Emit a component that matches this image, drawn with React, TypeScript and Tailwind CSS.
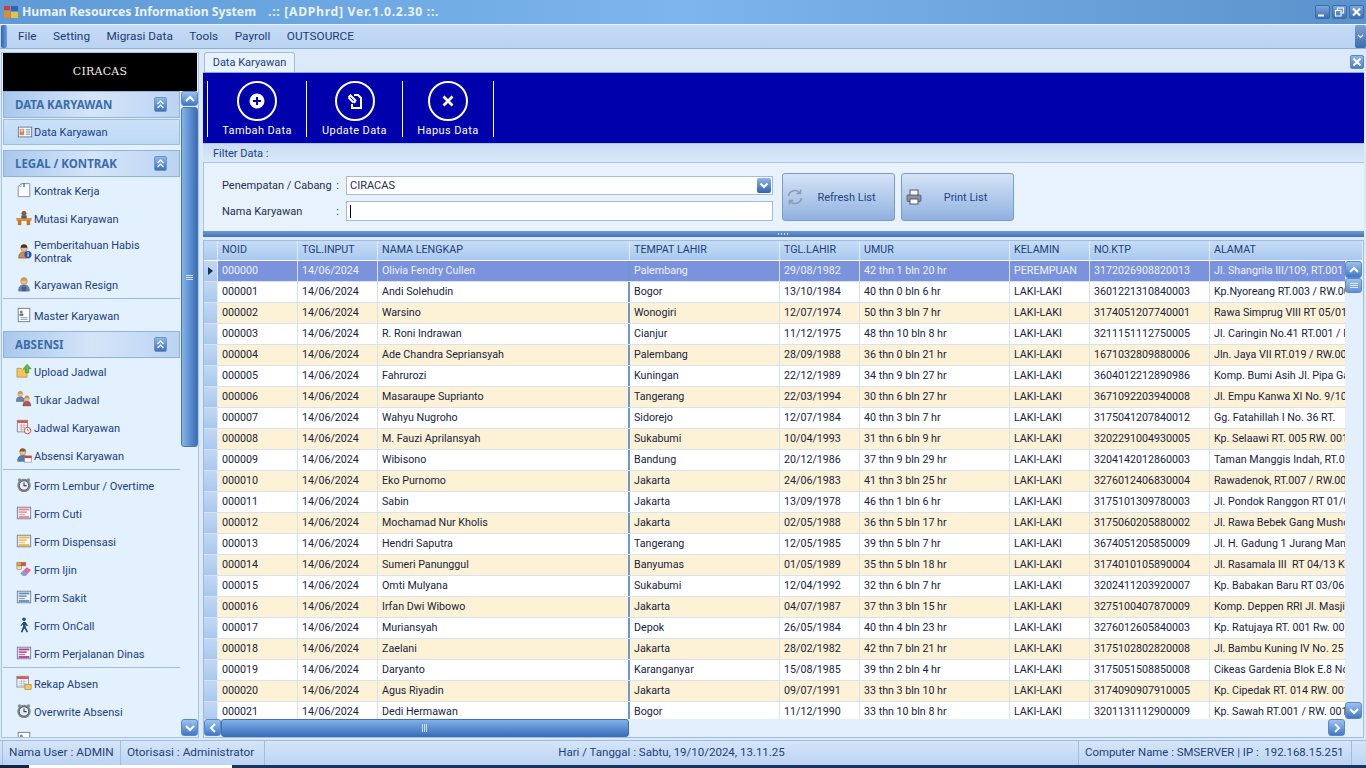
import { ReactNode } from "react";

const rows = [
  ["000000", "Olivia Fendry Cullen", "Palembang", "29/08/1982", "42 thn 1 bln 20 hr", "PEREMPUAN", "3172026908820013", "Jl. Shangrila III/109, RT.001 / RW"],
  ["000001", "Andi Solehudin", "Bogor", "13/10/1984", "40 thn 0 bln 6 hr", "LAKI-LAKI", "3601221310840003", "Kp.Nyoreang RT.003 / RW.001"],
  ["000002", "Warsino", "Wonogiri", "12/07/1974", "50 thn 3 bln 7 hr", "LAKI-LAKI", "3174051207740001", "Rawa Simprug VIII RT 05/01"],
  ["000003", "R. Roni Indrawan", "Cianjur", "11/12/1975", "48 thn 10 bln 8 hr", "LAKI-LAKI", "3211151112750005", "Jl. Caringin No.41 RT.001 / RW"],
  ["000004", "Ade Chandra Sepriansyah", "Palembang", "28/09/1988", "36 thn 0 bln 21 hr", "LAKI-LAKI", "1671032809880006", "Jln. Jaya VII RT.019 / RW.001"],
  ["000005", "Fahrurozi", "Kuningan", "22/12/1989", "34 thn 9 bln 27 hr", "LAKI-LAKI", "3604012212890986", "Komp. Bumi Asih Jl. Pipa Gas"],
  ["000006", "Masaraupe Suprianto", "Tangerang", "22/03/1994", "30 thn 6 bln 27 hr", "LAKI-LAKI", "3671092203940008", "Jl. Empu Kanwa XI No. 9/10"],
  ["000007", "Wahyu Nugroho", "Sidorejo", "12/07/1984", "40 thn 3 bln 7 hr", "LAKI-LAKI", "3175041207840012", "Gg. Fatahillah I No. 36 RT."],
  ["000008", "M. Fauzi Aprilansyah", "Sukabumi", "10/04/1993", "31 thn 6 bln 9 hr", "LAKI-LAKI", "3202291004930005", "Kp. Selaawi RT. 005 RW. 001"],
  ["000009", "Wibisono", "Bandung", "20/12/1986", "37 thn 9 bln 29 hr", "LAKI-LAKI", "3204142012860003", "Taman Manggis Indah, RT.001"],
  ["000010", "Eko Purnomo", "Jakarta", "24/06/1983", "41 thn 3 bln 25 hr", "LAKI-LAKI", "3276012406830004", "Rawadenok, RT.007 / RW.001"],
  ["000011", "Sabin", "Jakarta", "13/09/1978", "46 thn 1 bln 6 hr", "LAKI-LAKI", "3175101309780003", "Jl. Pondok Ranggon RT 01/02"],
  ["000012", "Mochamad Nur Kholis", "Jakarta", "02/05/1988", "36 thn 5 bln 17 hr", "LAKI-LAKI", "3175060205880002", "Jl. Rawa Bebek Gang Mushola"],
  ["000013", "Hendri Saputra", "Tangerang", "12/05/1985", "39 thn 5 bln 7 hr", "LAKI-LAKI", "3674051205850009", "Jl. H. Gadung 1 Jurang Mangu"],
  ["000014", "Sumeri Panunggul", "Banyumas", "01/05/1989", "35 thn 5 bln 18 hr", "LAKI-LAKI", "3174010105890004", "Jl. Rasamala III  RT 04/13 Kel"],
  ["000015", "Omti Mulyana", "Sukabumi", "12/04/1992", "32 thn 6 bln 7 hr", "LAKI-LAKI", "3202411203920007", "Kp. Babakan Baru RT 03/06"],
  ["000016", "Irfan Dwi Wibowo", "Jakarta", "04/07/1987", "37 thn 3 bln 15 hr", "LAKI-LAKI", "3275100407870009", "Komp. Deppen RRI Jl. Masjid"],
  ["000017", "Muriansyah", "Depok", "26/05/1984", "40 thn 4 bln 23 hr", "LAKI-LAKI", "3276012605840003", "Kp. Ratujaya RT. 001 Rw. 001"],
  ["000018", "Zaelani", "Jakarta", "28/02/1982", "42 thn 7 bln 21 hr", "LAKI-LAKI", "3175102802820008", "Jl. Bambu Kuning IV No. 25"],
  ["000019", "Daryanto", "Karanganyar", "15/08/1985", "39 thn 2 bln 4 hr", "LAKI-LAKI", "3175051508850008", "Cikeas Gardenia Blok E.8 No"],
  ["000020", "Agus Riyadin", "Jakarta", "09/07/1991", "33 thn 3 bln 10 hr", "LAKI-LAKI", "3174090907910005", "Kp. Cipedak RT. 014 RW. 001"],
  ["000021", "Dedi Hermawan", "Bogor", "11/12/1990", "33 thn 10 bln 8 hr", "LAKI-LAKI", "3201131112900009", "Kp. Sawah RT.001 / RW. 001"],
];

const headers = ["NOID", "TGL.INPUT", "NAMA LENGKAP", "TEMPAT LAHIR", "TGL.LAHIR", "UMUR", "KELAMIN", "NO.KTP", "ALAMAT"];

const Svg = ({ children, size = 18 }: { children: ReactNode; size?: number }) => (
  <svg width={size} height={size} viewBox="0 0 18 18" className="shrink-0">
    {children}
  </svg>
);

const FormIcon = ({ bars }: { bars: string }) => (
  <Svg size={16}>
    <rect x="1.5" y="2.5" width="15" height="13" fill="#f4f6fa" stroke="#6b7a90" />
    <rect x="3" y="4" width="12" height="2" fill={bars} />
    <rect x="3" y="7" width="9" height="2" fill={bars} opacity="0.8" />
    <rect x="3" y="10" width="7" height="1.5" fill={bars} opacity="0.7" />
    <rect x="3" y="12.5" width="12" height="2" fill={bars} />
  </Svg>
);

const Clock = () => (
  <Svg size={16}>
    <circle cx="4" cy="3.5" r="2" fill="#8a8f96" />
    <circle cx="14" cy="3.5" r="2" fill="#8a8f96" />
    <circle cx="9" cy="9.5" r="7.5" fill="#7f858c" />
    <circle cx="9" cy="9.5" r="5.3" fill="#e9eef4" stroke="#4d5460" />
    <path d="M9 6.2v3.5h3" fill="none" stroke="#27406b" strokeWidth="1.2" />
  </Svg>
);

const Person = ({ shirt = "#5a78a8", hair = "#8a5a2a" }: { shirt?: string; hair?: string }) => (
  <>
    <path d="M3 17c0-5 2-7 6-7s6 2 6 7z" fill={shirt} stroke="#3c4a66" strokeWidth="0.6" />
    <circle cx="9" cy="6" r="3.6" fill="#f2c08e" stroke="#8a5f38" strokeWidth="0.5" />
    <path d="M5.2 5.4C5.4 2.6 7 1.5 9 1.5s3.6 1.1 3.8 3.9z" fill={hair} />
  </>
);

const icons: Record<string, ReactNode> = {
  card: (
    <Svg size={16}>
      <rect x="1.5" y="3.5" width="15" height="11" fill="#f5f7fb" stroke="#66768f" />
      <rect x="3" y="5.5" width="5" height="7" fill="#c98a55" />
      <circle cx="5.5" cy="7.4" r="1.6" fill="#f3cda3" />
      <path d="M10 6.5h5M10 9h5M10 11.5h5" stroke="#5c7fae" />
    </Svg>
  ),
  paper: (
    <Svg size={16}>
      <path d="M2.5 5 6 1.8h9.5V16.5h-13z" fill="#fbfcfe" stroke="#7a8aa0" />
      <path d="M9 1v4.5" stroke="#53606f" strokeWidth="1.4" />
      <path d="M2.5 5H6V2" fill="none" stroke="#a9b5c4" />
    </Svg>
  ),
  desk: (
    <Svg size={16}>
      <circle cx="9" cy="3.8" r="2.8" fill="#8c5b2d" />
      <rect x="6" y="6" width="6" height="4" fill="#4b5a76" />
      <rect x="1" y="9.5" width="16" height="2.5" fill="#e8973a" stroke="#9a5a18" strokeWidth="0.5" />
      <rect x="2" y="12" width="4" height="5" fill="#c9771f" />
      <rect x="12" y="12" width="4" height="5" fill="#c9771f" />
    </Svg>
  ),
  info: (
    <Svg size={16}>
      <Person shirt="#d98a3d" hair="#4a3322" />
      <circle cx="13.5" cy="13" r="4" fill="#1e56b0" />
      <rect x="13" y="12" width="1.2" height="3.4" fill="#fff" />
      <rect x="13" y="10.3" width="1.2" height="1.2" fill="#fff" />
    </Svg>
  ),
  worker: (
    <Svg size={16}>
      <Person shirt="#6d86ab" hair="#c99a4a" />
      <rect x="6.5" y="12" width="5" height="5" fill="#3f5f93" />
    </Svg>
  ),
  master: (
    <Svg size={16}>
      <rect x="2.5" y="1.5" width="13" height="15" fill="#fbfcfe" stroke="#66768f" />
      <circle cx="6" cy="5.5" r="1.7" fill="#b27a4a" />
      <rect x="4" y="7.5" width="4.2" height="2.5" fill="#3b7f8f" />
      <path d="M5 12h8M5 14h8" stroke="#8b98aa" />
    </Svg>
  ),
  upload: (
    <Svg size={16}>
      <path d="M1 6h5l1.5 1.5h5V16H1z" fill="#f0c35c" stroke="#a5782a" strokeWidth="0.6" />
      <path d="M12.5 1.5 17 6.5h-2.6V11h-3.8V6.5H8z" fill="#5fbc3e" stroke="#3a7d22" strokeWidth="0.6" />
    </Svg>
  ),
  workers: (
    <Svg size={16}>
      <g transform="translate(-2,-1) scale(.75)">
        <Person shirt="#6d86ab" hair="#c99a4a" />
      </g>
      <g transform="translate(5.5,4) scale(.75)">
        <Person shirt="#c0504a" hair="#c99a4a" />
      </g>
    </Svg>
  ),
  calendar: (
    <Svg size={16}>
      <rect x="1.5" y="1.5" width="11.5" height="13" fill="#f7f8fb" stroke="#7a8798" />
      <rect x="1.5" y="1.5" width="11.5" height="3" fill="#cf5c55" />
      <path d="M4 7h8M4 9.5h6M4 12h5M6 5v9M9 5v5" stroke="#c98a88" strokeWidth="0.7" />
      <circle cx="13" cy="13" r="3.6" fill="#fff" stroke="#c43c33" strokeWidth="1.1" />
      <path d="M13 11v2.2h1.6" fill="none" stroke="#c43c33" strokeWidth="0.8" />
    </Svg>
  ),
  attend: (
    <Svg size={16}>
      <g transform="translate(-1,0) scale(.95)">
        <Person shirt="#4d7fb5" hair="#8a5a2a" />
      </g>
      <rect x="9.5" y="10" width="8" height="7" fill="#fff" stroke="#6b7380" strokeWidth="0.6" />
      <rect x="9.5" y="10" width="8" height="2.5" fill="#d2453c" />
    </Svg>
  ),
  clock: <Clock />,
  cuti: <FormIcon bars="#e9848a" />,
  disp: <FormIcon bars="#f2b53d" />,
  ijin: (
    <Svg size={16}>
      <rect x="1" y="1.5" width="5" height="4" fill="#e7a23a" stroke="#8a6a3a" strokeWidth="0.5" />
      <rect x="6" y="1.5" width="5" height="4" fill="#d9534a" stroke="#8a6a3a" strokeWidth="0.5" />
      <rect x="1" y="5.5" width="5" height="4" fill="#f6d5a0" stroke="#8a6a3a" strokeWidth="0.5" />
      <path d="M5 14 12 7l5 3-6 6.5H8z" fill="#e66a8a" />
      <path d="M5 14l3 2.5h3l2-2.2-4.5-3.4z" fill="#7f9fd6" />
    </Svg>
  ),
  sakit: <FormIcon bars="#5f88bd" />,
  walk: (
    <Svg size={16}>
      <circle cx="9" cy="2.6" r="2" fill="#1d4a86" />
      <path d="M8.6 5.4h1.8l3 4-1.2.9L10.6 8.4l.4 3 2.6 5.4-1.7.4-2.5-4.6-2.3 4.7-1.7-.5 2.6-6-.2-2.6-1.6 1.9-1.1-.9z" fill="#1d4a86" />
    </Svg>
  ),
  dinas: <FormIcon bars="#b53a88" />,
  rekap: (
    <Svg size={16}>
      <rect x="1" y="1.5" width="13" height="12" fill="#f2f4f8" stroke="#8890a0" />
      <rect x="1" y="1.5" width="13" height="3" fill="#d2605a" />
      <path d="M3 7h9M3 9.5h9M3 12h9M6 5v8M9 5v8" stroke="#aab4c6" strokeWidth="0.7" />
      <rect x="10" y="10.5" width="7" height="6" fill="#f6c662" stroke="#b07f22" strokeWidth="0.7" />
    </Svg>
  ),
};

const Section = ({ label }: { label: string }) => (
  <div className="h-[27px] ml-px mr-px flex items-center justify-between pl-[11px] pr-[12px] border border-[#8fb3dd] bg-gradient-to-r from-[#a9c8ed] via-[#d5e5f8] to-[#bcd4f2]">
    <span className="font-['Noto_Sans'] text-[11.5px] font-bold text-[#3a6cab]">{label}</span>
    <span className="w-[13px] h-[15px] rounded-[2px] bg-gradient-to-b from-[#8fb6e8] to-[#3e72b8] border border-[#6d95cc] text-white flex items-center justify-center">
      <svg width="9" height="11" viewBox="0 0 9 11" fill="none" stroke="#fff" strokeWidth="1.2">
        <path d="M1.5 5 4.5 2l3 3M1.5 9l3-3 3 3" />
      </svg>
    </span>
  </div>
);

const Item = ({ icon, label, h = "h-[28px]" }: { icon: string; label: ReactNode; h?: string }) => (
  <div className={`${h} flex items-center pl-[14px] text-[#20407f]`}>
    <span className="w-[18px] flex justify-start">{icons[icon]}</span>
    <span className="leading-[13px] pt-[2px]">{label}</span>
  </div>
);

const Sep = () => <div className="h-px ml-px mr-px bg-[#9fbbdc]" />;

const ScrollBtn = ({ dir, className = "" }: { dir: "up" | "down" | "left" | "right"; className?: string }) => {
  const d = { up: "M3 9l4-4 4 4", down: "M3 5l4 4 4-4", left: "M9 3 5 7l4 4", right: "M5 3l4 4-4 4" }[dir];
  return (
    <div className={`w-[17px] h-[17px] shrink-0 rounded-[3px] border border-[#5b88c4] bg-gradient-to-b from-[#9cc3f0] to-[#3f78c6] flex items-center justify-center ${className}`}>
      <svg width="14" height="14" viewBox="0 0 14 14" fill="none" stroke="#fff" strokeWidth="2">
        <path d={d} />
      </svg>
    </div>
  );
};

const ToolBtn = ({ label, w, children }: { label: string; w: string; children: ReactNode }) => (
  <div className={`${w} h-[56px] border-r border-white flex flex-col items-center text-white`}>
    <div className="w-[40px] h-[40px] shrink-0 rounded-full border-2 border-white flex items-center justify-center">
      {children}
    </div>
    <span className="mt-[2px] text-[11px] tracking-[0.4px] leading-[15px] whitespace-nowrap">{label}</span>
  </div>
);

const ActionBtn = ({ label, icon }: { label: string; icon: ReactNode }) => (
  <div className="w-[113px] h-[48px] rounded-[3px] border border-[#7c9ccb] bg-gradient-to-b from-[#d5e3f6] via-[#b3cbec] to-[#8fb1e0] flex items-center pl-[3px] text-[#1f4480]">
    {icon}
    <span className="flex-1 text-center pr-[5px] pt-[2px]">{label}</span>
  </div>
);

export default function App() {
  return (
    <div className="w-[1366px] h-[768px] overflow-hidden flex flex-col bg-[#dce9f9] font-['Roboto',sans-serif] text-[11px]">
      {/* title bar */}
      <div className="h-[24px] shrink-0 flex items-center pl-[3px] pr-[2px] bg-gradient-to-r from-[#5f9ad6] via-[#7db6ee] to-[#5a92cb]">
        <svg width="16" height="16" viewBox="0 0 16 16" className="shrink-0">
          <rect x="1" y="7" width="6" height="7" fill="#e58a2a" />
          <rect x="8" y="2" width="7" height="5" fill="#2f62b8" />
          <rect x="8" y="8" width="7" height="6" fill="#e8c23a" />
          <rect x="1" y="2" width="6" height="4" fill="#c9432f" />
        </svg>
        <span className="ml-[3px] font-['Noto_Sans'] font-bold text-[12.2px] text-[#eaf3fd] whitespace-pre">Human Resources Information System</span>
        <span className="ml-[12px] font-['Noto_Sans'] font-bold text-[12.2px] tracking-[0.7px] text-[#eaf3fd] whitespace-pre">.:: [ADPhrd] Ver.1.0.2.30 ::.</span>
        <div className="ml-auto flex gap-[2px]">
          {["min", "max", "close"].map((k) => (
            <div key={k} className="w-[15px] h-[14px] rounded-[2px] border border-[#3f6ca8] bg-gradient-to-b from-[#7ba6da] to-[#3d6fb2] flex items-center justify-center">
              <svg width="11" height="10" viewBox="0 0 11 10" fill="none" stroke="#fff" strokeWidth="1.5">
                {k === "min" && <path d="M1 8.5h6" strokeWidth="2" />}
                {k === "max" && <path d="M3.5 3V1h6v5H7.5M1.5 3.5h5.5v5.5H1.5z" strokeWidth="1.1" />}
                {k === "close" && <path d="M2 1.5l7 7M9 1.5l-7 7" strokeWidth="2" />}
              </svg>
            </div>
          ))}
        </div>
      </div>

      {/* menu bar */}
      <div className="h-[25px] shrink-0 flex items-center border-t border-[#e9f2fc] border-b-[#8fb0d8] border-b bg-gradient-to-b from-[#c6dbf5] to-[#b9d3f2]">
        <div className="w-[6px] ml-[1px] h-full rounded-[2px] bg-gradient-to-r from-[#2f66b0] to-[#6d9ddb]" />
        <div className="flex gap-[16.5px] pl-[11px] text-[11.8px] text-[#1d3b73]">
          {["File", "Setting", "Migrasi Data", "Tools", "Payroll", "OUTSOURCE"].map((m) => (
            <span key={m}>{m}</span>
          ))}
        </div>
        <div className="ml-auto w-[11px] h-full rounded-[2px] bg-gradient-to-b from-[#7ba2d4] to-[#3a6cb0] flex items-center justify-center">
          <svg width="7" height="5" viewBox="0 0 7 5" fill="none" stroke="#fff" strokeWidth="1.2"><path d="M1 1l2.5 2.5L6 1" /></svg>
        </div>
      </div>

      <div className="flex-1 min-h-0 flex pt-[3px]">
        {/* sidebar */}
        <div className="w-[198px] shrink-0 ml-[1px] border border-[#a8c3e3] bg-[#e3f0fd] flex flex-col overflow-hidden">
          <div className="h-[38px] shrink-0 mx-px bg-black flex items-center justify-center font-['DejaVu_Serif'] text-[11px] text-[#f0ede0] tracking-[0.2px]">CIRACAS</div>
          <div className="flex-1 min-h-0 flex">
            <div className="flex-1 min-w-0 overflow-hidden">
              <Section label="DATA KARYAWAN" />
              <div className="h-[26px] ml-px mr-px mt-[1px] mb-[5px] flex items-center pl-[13px] border border-[#9dbde3] bg-gradient-to-b from-[#cbe1f9] to-[#bcd8f6] text-[#20407f]">
                <span className="w-[17px]">{icons.card}</span><span className="pt-[2px]">Data Karyawan</span>
              </div>
              <Section label="LEGAL / KONTRAK" />
              <div className="-mt-px">
                <Item icon="paper" label="Kontrak Kerja" />
                <Item icon="desk" label="Mutasi Karyawan" />
                <Item icon="info" label={<>Pemberitahuan Habis<br />Kontrak</>} h="h-[38px]" />
                <Item icon="worker" label="Karyawan Resign" />
              </div>
              <Sep />
              <Item icon="master" label="Master Karyawan" h="h-[32px]" />
              <Section label="ABSENSI" />
              <div className="-mt-px">
                <Item icon="upload" label="Upload Jadwal" />
                <Item icon="workers" label="Tukar Jadwal" />
                <Item icon="calendar" label="Jadwal Karyawan" />
                <Item icon="attend" label="Absensi Karyawan" />
              </div>
              <Sep />
              <div className="pt-[1px]">
                <Item icon="clock" label="Form Lembur / Overtime" />
                <Item icon="cuti" label="Form Cuti" />
                <Item icon="disp" label="Form Dispensasi" />
                <Item icon="ijin" label="Form Ijin" />
                <Item icon="sakit" label="Form Sakit" />
                <Item icon="walk" label="Form OnCall" />
                <Item icon="dinas" label="Form Perjalanan Dinas" />
              </div>
              <Sep />
              <div className="pt-[1px]">
                <Item icon="rekap" label="Rekap Absen" />
                <Item icon="clock" label="Overwrite Absensi" />
                <Item icon="master" label="" />
              </div>
            </div>
            <div className="w-[17px] shrink-0 flex flex-col pb-[1px]">
              <ScrollBtn dir="up" className="!h-[15px]" />
              <div className="h-[340px] mt-[1px] rounded-[3px] border border-[#4a78b5] bg-gradient-to-r from-[#86b3e8] via-[#5f90d0] to-[#3d6eb5] flex items-center justify-center">
                <div className="w-[7px] h-[5px] bg-[repeating-linear-gradient(180deg,#cfe0f5_0_1px,transparent_1px_2px)]" />
              </div>
              <div className="flex-1" />
              <ScrollBtn dir="down" />
            </div>
          </div>
        </div>

        {/* main */}
        <div className="flex-1 min-w-0 ml-[4px] mr-[2px] flex flex-col">
          <div className="h-[20px] shrink-0 flex items-end justify-between">
            <div className="h-[20px] w-[91px] ml-[1px] pt-[2px] rounded-t-[3px] border border-b-0 border-[#9dbde3] bg-[#e9f3fe] flex items-center justify-center text-[#20407f]">Data Karyawan</div>
            <div className="w-[14px] h-[14px] mb-[3px] rounded-[2px] border border-[#5b88c4] bg-gradient-to-b from-[#8fb6e8] to-[#4a7fc4] flex items-center justify-center">
              <svg width="10" height="10" viewBox="0 0 10 10" fill="none" stroke="#fff" strokeWidth="2">
                <path d="M1.5 1.5l7 7M8.5 1.5l-7 7" />
              </svg>
            </div>
          </div>

          {/* toolbar */}
          <div className="h-[71px] shrink-0 bg-[#0000ad] border-t border-[#7fa9e0] flex items-start pt-[8px] pl-[4px]">
            <div className="w-px h-[56px] bg-white" />
            <ToolBtn label="Tambah Data" w="w-[99px]">
              <svg width="20" height="20" viewBox="0 0 20 20">
                <circle cx="10" cy="10" r="7.5" fill="#fff" />
                <path d="M10 6v8M6 10h8" stroke="#0000ad" strokeWidth="2" />
              </svg>
            </ToolBtn>
            <ToolBtn label="Update Data" w="w-[96px]">
              <svg width="20" height="20" viewBox="0 0 20 20" fill="none" stroke="#fff" strokeWidth="2">
                <path d="M9 4h4l3 3v10H7v-4" />
                <path d="M3.5 6.5l5 5M3.5 6.5l2-2 5 5-1.5 2.5" />
              </svg>
            </ToolBtn>
            <ToolBtn label="Hapus Data" w="w-[91px]">
              <svg width="20" height="20" viewBox="0 0 20 20" fill="none" stroke="#fff" strokeWidth="2.8">
                <path d="M5.5 5.5l9 9M14.5 5.5l-9 9" />
              </svg>
            </ToolBtn>
          </div>

          {/* filter */}
          <div className="h-[20px] shrink-0 flex items-center pl-[10px] pt-[3px] border-y border-[#a9c6e8] bg-gradient-to-b from-[#c9dcf4] to-[#dae8f9] text-[#20407f]">Filter Data :</div>
          <div className="h-[68px] shrink-0 border-l border-[#a9c6e8] bg-[#e8f2fd] flex items-start pt-[10px] pl-[18px] text-[#1d2f50]">
            <div className="w-[124px] flex flex-col">
              <div className="h-[19px] mt-[3px] pt-[1px] flex justify-between items-center pr-[7px]"><span>Penempatan / Cabang</span><span>:</span></div>
              <div className="h-[19px] mt-[7px] pt-[1px] flex justify-between items-center pr-[7px]"><span>Nama Karyawan</span><span>:</span></div>
            </div>
            <div className="w-[427px] mt-[3px] flex flex-col gap-[6px]">
              <div className="h-[19px] bg-white border border-[#a3bcdc] flex items-center justify-between pl-[3px] pr-px">
                <span className="pt-px">CIRACAS</span>
                <span className="w-[14px] h-[15px] rounded-[2px] bg-gradient-to-b from-[#8fb6e8] to-[#2f64ae] flex items-center justify-center">
                  <svg width="10" height="8" viewBox="0 0 10 8" fill="none" stroke="#fff" strokeWidth="2"><path d="M1.5 1.5 5 5l3.5-3.5" /></svg>
                </span>
              </div>
              <div className="h-[20px] bg-white border border-[#a3bcdc] flex items-center pl-[3px]">
                <div className="w-px h-[13px] bg-black" />
              </div>
            </div>
            <div className="flex gap-[6px] ml-[9px]">
              <ActionBtn
                label="Refresh List"
                icon={
                  <svg width="18" height="18" viewBox="0 0 18 18" fill="none" stroke="#8e9bae" strokeWidth="1.6">
                    <path d="M2.5 8a6.5 6.5 0 0 1 11.5-3M15.5 10A6.5 6.5 0 0 1 4 13" />
                    <path d="M14.5 1.5V5.5H10.5M3.5 16.5V12.5H7.5" />
                  </svg>
                }
              />
              <ActionBtn
                label="Print List"
                icon={
                  <svg width="18" height="18" viewBox="0 0 18 18">
                    <rect x="5" y="2" width="8" height="6" fill="#f5f7fa" stroke="#556" />
                    <rect x="2" y="7" width="14" height="6.5" rx="1" fill="#8a94a3" stroke="#445" strokeWidth="0.7" />
                    <rect x="5" y="11" width="8" height="5" fill="#fff" stroke="#556" />
                  </svg>
                }
              />
            </div>
          </div>

          {/* splitter */}
          <div className="h-[6px] shrink-0 bg-gradient-to-b from-[#6d9bd6] to-[#3f72b8] flex items-center justify-center">
            <div className="w-[12px] h-[2px] bg-[repeating-linear-gradient(90deg,#cfe0f5_0_1px,transparent_1px_3px)]" />
          </div>

          {/* grid */}
          <div className="flex-1 min-h-0 mt-[3px] border border-[#9dbde3] bg-[#e3effc] flex flex-col text-[#16243f] text-[10.7px]">
            <div className="h-[20px] shrink-0 grid grid-cols-[14px_80px_80px_252px_150px_80px_150px_80px_120px_153px] bg-gradient-to-b from-[#c7dcf6] to-[#a9c9ef] text-[#1e3f7a] border-b border-white">
              <div className="border-r border-[#e2edfa]" />
              {headers.map((h) => (
                <div key={h} className="pl-[4px] flex items-center border-r border-[#e2edfa]">{h}</div>
              ))}
            </div>
            <div className="flex-1 min-h-0 flex">
              <div className="flex-1 min-w-0 overflow-hidden">
                {rows.map((r, i) => (
                  <div
                    key={r[0]}
                    className={`h-[21px] w-[1159px] grid grid-cols-[14px_80px_80px_252px_150px_80px_150px_80px_120px_153px] border-b border-[#d5e2f2] ${i === 0 ? "bg-[#7b93dc] text-[#eef2fc]" : i % 2 ? "bg-white" : "bg-[#fdf1d6]"}`}
                  >
                    <div className="bg-gradient-to-b from-[#c2d8f4] to-[#a9c8ee] border-r border-[#e2edfa] flex items-center justify-center">
                      {i === 0 && <svg width="5" height="8" viewBox="0 0 5 8"><path d="M0 0l5 4-5 4z" fill="#1d2f50" /></svg>}
                    </div>
                    <div className="pl-[4px] flex items-center border-r border-[#d5e2f2]">{r[0]}</div>
                    <div className="pl-[4px] flex items-center border-r border-[#d5e2f2]">14/06/2024</div>
                    <div className="pl-[4px] flex items-center border-r-2 border-[#6f97c9]">{r[1]}</div>
                    {r.slice(2).map((c, j) => (
                      <div key={j} className="pl-[4px] flex items-center border-r border-[#d5e2f2] overflow-hidden whitespace-pre">{c}</div>
                    ))}
                  </div>
                ))}
              </div>
              <div className="w-[17px] shrink-0 mr-px flex flex-col">
                <ScrollBtn dir="up" />
                <div className="h-[15px] rounded-[3px] border border-[#5b88c4] bg-gradient-to-b from-[#9cc3f0] to-[#5f90d4] flex items-center justify-center">
                  <div className="w-[8px] h-[5px] bg-[repeating-linear-gradient(180deg,#e2edfa_0_1px,transparent_1px_2px)]" />
                </div>
                <div className="flex-1" />
                <ScrollBtn dir="down" />
              </div>
            </div>
            <div className="h-[18px] shrink-0 flex">
              <ScrollBtn dir="left" />
              <div className="w-[408px] rounded-[3px] border border-[#3f6fb0] bg-gradient-to-b from-[#82b1e8] to-[#3a6fbb] flex items-center justify-center">
                <div className="w-[6px] h-[8px] bg-[repeating-linear-gradient(90deg,#cfe0f5_0_1px,transparent_1px_2px)]" />
              </div>
              <div className="flex-1" />
              <ScrollBtn dir="right" className="mr-[18px]" />
            </div>
          </div>
        </div>
      </div>

      {/* status bar */}
      <div className="h-[25px] shrink-0 mt-[2px] flex items-center border-t border-[#9dbde3] bg-gradient-to-b from-[#d5e5f9] to-[#bcd4f3] text-[11.8px] text-[#1f3f78] whitespace-pre">
        <div className="w-[119px] h-full pl-[6px] flex items-center border-x border-[#9dbde3] ml-[2px]">Nama User : ADMIN</div>
        <div className="w-[143px] h-full pl-[5px] flex items-center border-r border-[#9dbde3] ml-px">Otorisasi : Administrator</div>
        <div className="flex-1 text-center text-[11.5px]">Hari / Tanggal : Sabtu, 19/10/2024, 13.11.25</div>
        <div className="w-[274px] h-full pl-[6px] flex items-center border-x border-[#9dbde3] text-[11.4px]">Computer Name : SMSERVER | IP :  192.168.15.251</div>
        <div className="w-[14px]" />
      </div>
      <div className="h-[3px] shrink-0 flex">
        <div className="w-[29px] bg-[#16243f]" />
        <div className="w-[203px] bg-white" />
        <div className="flex-1 bg-[#16345c]" />
      </div>
    </div>
  );
}
